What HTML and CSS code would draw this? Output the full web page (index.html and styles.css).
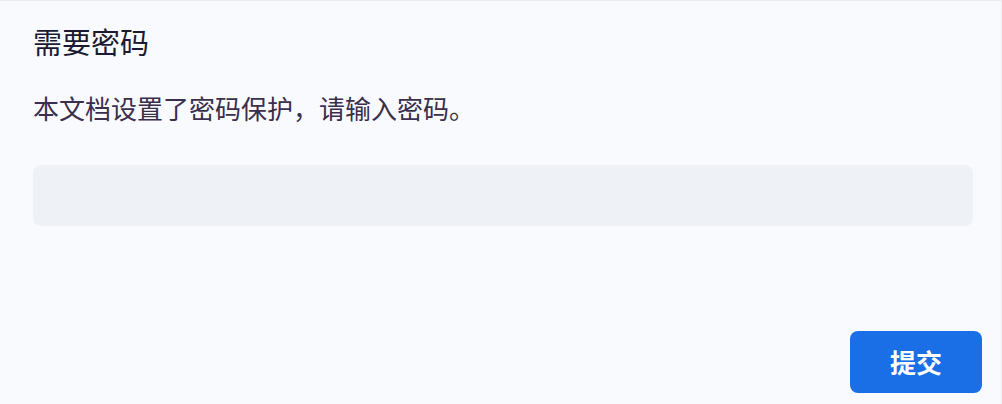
FILE: index.html
```html
<!DOCTYPE html>
<html lang="zh-CN">
<head>
<meta charset="utf-8">
<title>需要密码</title>
<link rel="stylesheet" href="styles.css">
</head>
<body>
<div class="dialog">
  <h1 class="title">需要密码</h1>
  <p class="desc">本文档设置了密码保护，请输入密码。</p>
  <input class="pwd" type="password" aria-label="密码">
  <div class="actions">
    <button class="submit" type="button">提交</button>
  </div>
</div>
</body>
</html>
```
FILE: styles.css
```css
html, body {
  margin: 0;
  padding: 0;
  background: #f9fafd;
}
.dialog {
  box-sizing: border-box;
  width: 1002px;
  height: 404px;
  border-top: 1px solid #ececf0;
  border-right: 1px solid #efeff2;
  padding: 26px 19px 0 33px;
  display: flex;
  flex-direction: column;
  font-family: "Noto Sans CJK SC", "Noto Sans", sans-serif;
}
.title {
  margin: 0;
  font-size: 29px;
  line-height: 29px;
  font-weight: 400;
  color: #1b1a33;
}
.desc {
  margin: 39px 0 0 0;
  font-size: 26px;
  line-height: 26px;
  font-weight: 400;
  color: #3a2f4c;
}
.pwd {
  box-sizing: border-box;
  margin: 44px 9px 0 0;
  height: 61px;
  border: none;
  border-radius: 8px;
  background: #eef1f5;
  outline: none;
  padding: 0 16px;
  font-size: 22px;
}
.actions {
  margin-top: 105px;
  display: flex;
  justify-content: flex-end;
}
.submit {
  width: 132px;
  height: 62px;
  border: none;
  border-radius: 8px;
  background: #1a6fe6;
  color: #ffffff;
  font-family: "Noto Sans CJK SC", "Noto Sans", sans-serif;
  font-size: 26px;
  font-weight: 700;
  line-height: 1;
  padding: 0;
}
```
